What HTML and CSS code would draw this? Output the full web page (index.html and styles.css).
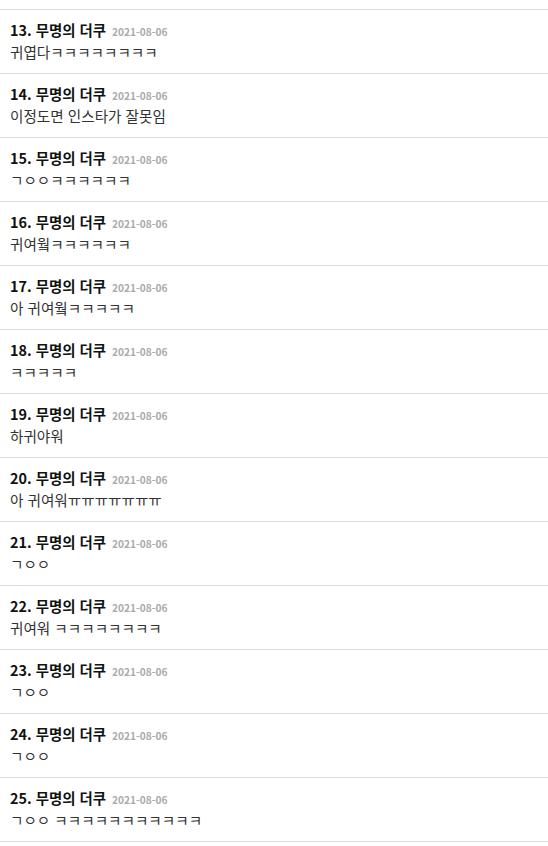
FILE: index.html
```html
<!DOCTYPE html>
<html lang="ko">
<head>
    <meta charset="UTF-8">
    <meta name="viewport" content="width=device-width, initial-scale=1.0">
    <title>댓글</title>
    <link rel="stylesheet" href="styles.css">
</head>
<body>

<div class="comment-tail"></div>
<ul class="comment-list">
    <li class="comment">
        <div class="comment-head"><span class="comment-author">13. 무명의 더쿠</span><span class="comment-date">2021-08-06</span></div>
        <div class="comment-body">귀엽다ㅋㅋㅋㅋㅋㅋㅋㅋ</div>
    </li>
    <li class="comment">
        <div class="comment-head"><span class="comment-author">14. 무명의 더쿠</span><span class="comment-date">2021-08-06</span></div>
        <div class="comment-body">이정도면 인스타가 잘못임</div>
    </li>
    <li class="comment">
        <div class="comment-head"><span class="comment-author">15. 무명의 더쿠</span><span class="comment-date">2021-08-06</span></div>
        <div class="comment-body">ㄱㅇㅇㅋㅋㅋㅋㅋㅋ</div>
    </li>
    <li class="comment">
        <div class="comment-head"><span class="comment-author">16. 무명의 더쿠</span><span class="comment-date">2021-08-06</span></div>
        <div class="comment-body">귀여웤ㅋㅋㅋㅋㅋㅋ</div>
    </li>
    <li class="comment">
        <div class="comment-head"><span class="comment-author">17. 무명의 더쿠</span><span class="comment-date">2021-08-06</span></div>
        <div class="comment-body">아 귀여웤ㅋㅋㅋㅋㅋ</div>
    </li>
    <li class="comment">
        <div class="comment-head"><span class="comment-author">18. 무명의 더쿠</span><span class="comment-date">2021-08-06</span></div>
        <div class="comment-body">ㅋㅋㅋㅋㅋ</div>
    </li>
    <li class="comment">
        <div class="comment-head"><span class="comment-author">19. 무명의 더쿠</span><span class="comment-date">2021-08-06</span></div>
        <div class="comment-body">하귀야워</div>
    </li>
    <li class="comment">
        <div class="comment-head"><span class="comment-author">20. 무명의 더쿠</span><span class="comment-date">2021-08-06</span></div>
        <div class="comment-body">아 귀여워ㅠㅠㅠㅠㅠㅠㅠ</div>
    </li>
    <li class="comment">
        <div class="comment-head"><span class="comment-author">21. 무명의 더쿠</span><span class="comment-date">2021-08-06</span></div>
        <div class="comment-body">ㄱㅇㅇ</div>
    </li>
    <li class="comment">
        <div class="comment-head"><span class="comment-author">22. 무명의 더쿠</span><span class="comment-date">2021-08-06</span></div>
        <div class="comment-body">귀여워 ㅋㅋㅋㅋㅋㅋㅋㅋ</div>
    </li>
    <li class="comment">
        <div class="comment-head"><span class="comment-author">23. 무명의 더쿠</span><span class="comment-date">2021-08-06</span></div>
        <div class="comment-body">ㄱㅇㅇ</div>
    </li>
    <li class="comment">
        <div class="comment-head"><span class="comment-author">24. 무명의 더쿠</span><span class="comment-date">2021-08-06</span></div>
        <div class="comment-body">ㄱㅇㅇ</div>
    </li>
    <li class="comment">
        <div class="comment-head"><span class="comment-author">25. 무명의 더쿠</span><span class="comment-date">2021-08-06</span></div>
        <div class="comment-body">ㄱㅇㅇ ㅋㅋㅋㅋㅋㅋㅋㅋㅋㅋㅋ</div>
    </li>
</ul>

</body>
</html>
```

FILE: styles.css
```css
body {
    margin: 0;
    background: #fff;
    font-family: "Noto Sans CJK KR", "Noto Sans", sans-serif;
    color: #333;
}

/* bottom of the previous comment, cut off by the scroll */
.comment-tail {
    height: 9px;
    border-bottom: 1px solid #ddd;
}

.comment-list {
    list-style: none;
    margin: 0;
    padding: 0;
}

.comment {
    padding: 9px 10px 10px;
    border-bottom: 1px solid #ddd;
}

.comment-head {
    display: flex;
    align-items: baseline;
    height: 22px;
    line-height: 22px;
}

.comment-author {
    font-size: 14.4px;
    font-weight: 700;
    color: #111;
}

.comment-date {
    margin-left: 6px;
    font-size: 10.2px;
    font-weight: 700;
    line-height: 1;
    color: #aaa;
}

.comment-body {
    height: 22px;
    font-size: 14.6px;
    line-height: 22px;
    color: #333;
}
```
